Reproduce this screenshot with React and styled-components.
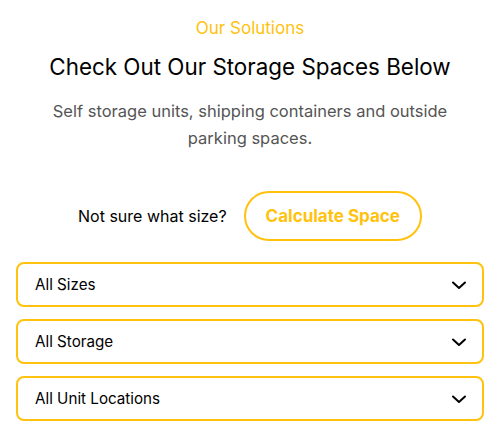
import React from "react";
import styled, { createGlobalStyle } from "styled-components";

const GlobalStyle = createGlobalStyle`
  body {
    margin: 0;
    background: #fff;
    font-family: Inter, "Noto Sans", sans-serif;
  }
`;

const YELLOW = "#ffc20e";

const Section = styled.section`
  display: flex;
  flex-direction: column;
  align-items: center;
  padding: 16px 16px 0;
  text-align: center;
`;

const Eyebrow = styled.p`
  margin: 0;
  color: ${YELLOW};
  font-size: 17px;
  line-height: 24px;
`;

const Title = styled.h2`
  margin: 11px 0 0;
  color: #000;
  font-size: 22.4px;
  font-weight: 400;
  line-height: 32px;
`;

const Lead = styled.p`
  margin: 15px 0 0;
  max-width: 410px;
  color: #555;
  font-size: 16.5px;
  line-height: 27px;
`;

const Prompt = styled.div`
  display: flex;
  align-items: center;
  gap: 17px;
  margin-top: 39px;
`;

const PromptText = styled.span`
  color: #000;
  font-size: 16px;
`;

const OutlineButton = styled.button`
  height: 50px;
  padding: 0 20px;
  border: 2px solid ${YELLOW};
  border-radius: 25px;
  background: #fff;
  color: ${YELLOW};
  font-family: inherit;
  font-size: 17px;
  font-weight: 700;
  cursor: pointer;
`;

const Filters = styled.div`
  display: flex;
  flex-direction: column;
  gap: 12px;
  align-self: stretch;
  margin-top: 21px;
`;

const SelectBox = styled.div`
  display: flex;
  align-items: center;
  justify-content: space-between;
  height: 45px;
  box-sizing: border-box;
  padding: 0 15px 0 17px;
  border: 2px solid ${YELLOW};
  border-radius: 8px;
  font-size: 15.2px;
  color: #000;
  text-align: left;
`;

const Chevron = () => (
  <svg width="16" height="16" viewBox="0 0 16 16" fill="none">
    <path d="M2 5.5L8 11l6-5.5" stroke="#000" strokeWidth="2" strokeLinecap="round" strokeLinejoin="round" />
  </svg>
);

const filters = ["All Sizes", "All Storage", "All Unit Locations"];

const App = () => (
  <>
    <GlobalStyle />
    <Section>
      <Eyebrow>Our Solutions</Eyebrow>
      <Title>Check Out Our Storage Spaces Below</Title>
      <Lead>Self storage units, shipping containers and outside parking spaces.</Lead>
      <Prompt>
        <PromptText>Not sure what size?</PromptText>
        <OutlineButton type="button">Calculate Space</OutlineButton>
      </Prompt>
      <Filters>
        {filters.map((label) => (
          <SelectBox key={label}>
            <span>{label}</span>
            <Chevron />
          </SelectBox>
        ))}
      </Filters>
    </Section>
  </>
);

export default App;
